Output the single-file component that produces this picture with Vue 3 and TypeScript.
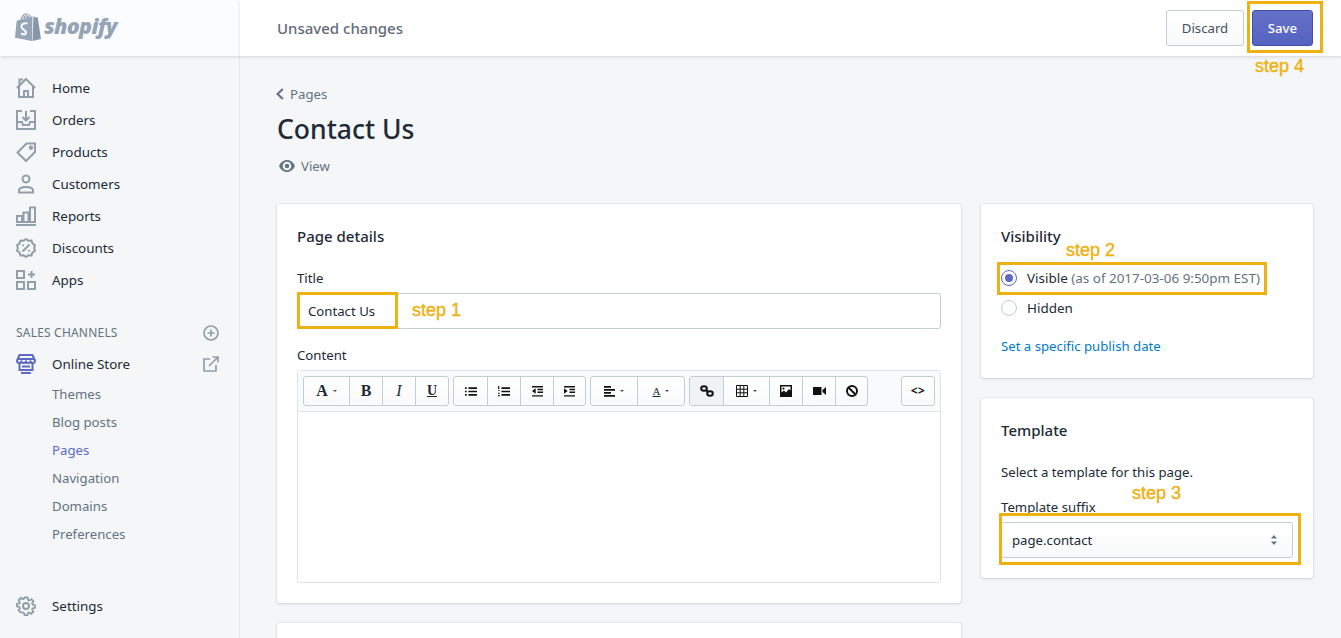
<script setup lang="ts">
interface NavItem { label: string; paths: string[] }
const mainNav: NavItem[] = [
  { label: 'Home', paths: ['M3 8.500V19h14V8.500', 'M1 10 10 1l9 9', 'M8 19v-6h4v6', 'M3.500 7V1.500H7'] },
  { label: 'Orders', paths: ['M6 1H1v18h18V1h-5', 'M1 12h5l1 3h6l1-3h5', 'M10 1v9', 'M6.500 7 10 10.500 13.500 7'] },
  { label: 'Products', paths: ['M10.500 1.500H19V10l-9 9-8.500-8.500z', 'M15 4.500a1.200 1.200 0 1 0 .01 0z'] },
  { label: 'Customers', paths: ['M10 1.500a3.500 3.500 0 1 0 .01 0z', 'M3 18.500v-2c0-2.500 3-3.500 7-3.500s7 1 7 3.500v2z'] },
  { label: 'Reports', paths: ['M0 19h20', 'M1 16v-6h5v6z', 'M7.500 16V6.500h5V16z', 'M14 16V1.500h5V16z'] },
  { label: 'Discounts', paths: ['M10 1l2.500 1.800 3-.2 1 2.900 2.500 1.800-.9 2.700.9 2.700-2.500 1.800-1 2.900-3-.2L10 19l-2.500-1.800-3 .2-1-2.900L1 12.700 1.900 10 1 7.300l2.500-1.800 1-2.900 3 .2z', 'M6.500 13.500l7-7', 'M7 6.500v1.500', 'M13 12v1.500'] },
  { label: 'Apps', paths: ['M1 1h7v7H1z', 'M1 12h7v7H1z', 'M12 12h7v7h-7z', 'M15.500 1v7', 'M12 4.500h7'] },
]
const subNav: string[] = ['Themes', 'Blog posts', 'Pages', 'Navigation', 'Domains', 'Preferences']
</script>

<template>
  <div class="app">
    <aside class="side">
      <div class="brand">
        <svg class="bag" viewBox="0 0 26 30" width="26" height="30">
          <path fill="#95a5b5" d="M17.500 4.300 15.900 4.800C15.500 3.300 14.600 2 13.100 2h-.4C12.200 1.500 11.700 1.200 11.100 1.200 7.700 1.300 6 5.500 5.500 7.700L2.600 8.600C1.700 8.900 1.700 8.900 1.600 9.700L0 25.800 17 29z" />
          <path fill="#8496a8" d="M18.500 4.200 17.500 29 26 27 22.800 5.900C22.700 5.500 22.400 5.400 22.200 5.400L20 5.200z" />
          <path fill="none" stroke="#f6f8fa" stroke-width="2.200" d="M12.500 11.500C11 11 6.500 11 6.500 14.500c0 3.500 4.500 3.200 4.500 6 0 2.500-3 2-5 1" />
          <path fill="none" stroke="#f4f6f8" stroke-width="1" d="M7.500 7.500C8 5 9.500 2.500 11.500 2.500M10.500 6.500C11 5 12 3 13 3c1.500 0 1.700 2 1.700 2.500" />
        </svg>
        <span class="word">shopify</span>
      </div>

      <nav class="nav">
        <a v-for="item in mainNav" :key="item.label" class="row">
          <svg class="ico" viewBox="0 0 20 20" width="20" height="20">
            <path v-for="d in item.paths" :key="d" :d="d" />
          </svg>
          <span>{{ item.label }}</span>
        </a>
      </nav>

      <div class="channels">
        <span>SALES CHANNELS</span>
        <svg class="ico small" viewBox="0 0 16 16" width="16" height="16">
          <circle cx="8" cy="8" r="7" />
          <path d="M8 4.500v7M4.500 8h7" />
        </svg>
      </div>

      <a class="row store">
        <svg class="ico active" viewBox="0 0 20 20" width="20" height="20">
          <path d="M3.500 1h13L19 6.500c0 1.500-1 2.500-2.250 2.500S14.500 8 14.500 6.500c0 1.500-1 2.500-2.250 2.500S10 8 10 6.500C10 8 9 9 7.750 9S5.500 8 5.500 6.500C5.500 8 4.500 9 3.250 9S1 8 1 6.500z" />
          <path d="M3.500 9v7h13V9" />
          <path d="M6 12.500h8" />
          <path d="M5 19h10" />
          <path d="M1 5h18" />
        </svg>
        <span class="store-name">Online Store</span>
        <svg class="ico small ext" viewBox="0 0 16 16" width="16" height="16">
          <path d="M7 3H1v12h12V9" />
          <path d="M6 10 15 1M9.500 1H15v5.500" />
        </svg>
      </a>

      <div class="sub">
        <a v-for="s in subNav" :key="s" :class="['sub-row', { on: s === 'Pages' }]">{{ s }}</a>
      </div>

      <a class="row settings">
        <svg class="ico" viewBox="0 0 20 20" width="20" height="20">
          <path d="M8.300 1h3.400l.5 2.600 1.500.7 2.300-1.400 2.300 2.400-1.500 2.200.6 1.500 2.600.5v3l-2.600.5-.6 1.500 1.500 2.200-2.300 2.400-2.300-1.500-1.500.7-.5 2.200H8.300l-.5-2.200-1.500-.7L4 17.600l-2.300-2.400 1.500-2.200-.6-1.500L0 11V8l2.600-.5.600-1.500-1.500-2.200L4 1.400l2.300 1.400 1.500-.7z" transform="translate(1 .6) scale(.9)" />
          <circle cx="10" cy="10" r="3" />
        </svg>
        <span>Settings</span>
      </a>
    </aside>

    <div class="main">
      <header class="bar">
        <span class="unsaved">Unsaved changes</span>
        <div class="actions">
          <button class="btn discard">Discard</button>
          <button class="btn save">Save</button>
        </div>
      </header>

      <section class="content">
        <div class="crumb">
          <svg viewBox="0 0 8 12" width="8" height="12"><path d="M6.800 1 1.500 6l5.300 5" fill="none" stroke="#637381" stroke-width="2.200" /></svg>
          <span>Pages</span>
        </div>
        <h1 class="title">Contact Us</h1>
        <div class="view">
          <svg viewBox="0 0 16 12" width="16" height="12">
            <path fill="#637381" d="M8 0C4.500 0 1.500 2.500 0 6c1.500 3.500 4.500 6 8 6s6.500-2.500 8-6c-1.500-3.500-4.500-6-8-6zm0 10.300A4.300 4.300 0 1 1 8 1.700a4.300 4.300 0 0 1 0 8.600z" />
            <circle fill="#637381" cx="8" cy="6" r="2.300" />
          </svg>
          <span>View</span>
        </div>

        <div class="grid">
          <div class="col">
            <div class="card">
              <h2>Page details</h2>
              <label class="lab first">Title</label>
              <div class="input">Contact Us</div>
              <label class="lab second">Content</label>
              <div class="editor">
                <div class="tools">
                  <div class="group">
                    <span class="tb w45"><b class="serif big">A</b><i class="caret"></i></span>
                    <span class="tb w33"><b class="serif big">B</b></span>
                    <span class="tb w33"><em class="serif big">I</em></span>
                    <span class="tb w33"><b class="serif under">U</b></span>
                  </div>
                  <div class="group">
                    <span class="tb w33"><svg class="g" viewBox="0 0 14 12" width="12" height="11"><path d="M0 1h2v2H0zM0 5h2v2H0zM0 9h2v2H0zM4 1h10v2H4zM4 5h10v2H4zM4 9h10v2H4z" /></svg></span>
                    <span class="tb w33"><svg class="g" viewBox="0 0 14 12" width="12" height="11"><path d="M0 0h1.500v3H0zM0 4.500h2V5.500H0zM0 7.500h2v1H0zM0 10h2v1.500H0zM4 1h10v2H4zM4 5h10v2H4zM4 9h10v2H4z" /></svg></span>
                    <span class="tb w33"><svg class="g" viewBox="0 0 14 12" width="13" height="11"><path d="M1 0h12v1.500H1zM7 3h6v1.500H7zM7 6h6v1.500H7zM1 10h12v1.500H1zM5 2.500v6L1 5.500z" /></svg></span>
                    <span class="tb w32"><svg class="g" viewBox="0 0 14 12" width="13" height="11"><path d="M1 0h12v1.500H1zM7 3h6v1.500H7zM7 6h6v1.500H7zM1 10h12v1.500H1zM1 2.500v6l4-3z" /></svg></span>
                  </div>
                  <div class="group">
                    <span class="tb w46"><svg class="g" viewBox="0 0 11 11" width="11" height="11"><path d="M0 0h7v1.800H0zM0 3h11v1.800H0zM0 6h7v1.800H0zM0 9h11v1.800H0z" /></svg><i class="caret"></i></span>
                    <span class="tb w47"><b class="serif under small-a">A</b><i class="caret"></i></span>
                  </div>
                  <div class="group">
                    <span class="tb w33 pressed"><svg viewBox="0 0 14 12" width="14" height="12" fill="none" stroke="#111" stroke-width="2"><ellipse cx="4" cy="3.500" rx="2.800" ry="2.300" /><ellipse cx="10" cy="8.500" rx="2.800" ry="2.300" /><path d="M6 5l2 2" /></svg></span>
                    <span class="tb w46"><svg viewBox="0 0 12 12" width="12" height="12" fill="none" stroke="#111"><path d="M.5.500h11v11H.5zM.5 4.200h11M.5 7.800h11M4.200.5v11M7.800.5v11" /></svg><i class="caret"></i></span>
                    <span class="tb w33"><svg viewBox="0 0 12 12" width="12" height="12"><path fill="#111" fill-rule="evenodd" d="M0 0h12v12H0zM1.500 1.500v6l2.500-2 2 2 3-3.500 1.500 1.500v-4zM3.500 2.500a1 1 0 1 1-.01 0z" /></svg></span>
                    <span class="tb w33"><svg class="g" viewBox="0 0 13 10" width="13" height="10"><path d="M0 1h8.500v8H0zM9.500 4 13 1v8L9.500 6z" /></svg></span>
                    <span class="tb w32"><svg viewBox="0 0 12 12" width="12" height="12" fill="none" stroke="#111" stroke-width="2"><circle cx="6" cy="6" r="5" /><path d="M2.500 2.500l7 7" /></svg></span>
                  </div>
                  <div class="group end">
                    <span class="tb w32 code">&lt;&gt;</span>
                  </div>
                </div>
                <div class="area"></div>
              </div>
            </div>
            <div class="card stub"></div>
          </div>

          <div class="col">
            <div class="card">
              <h2>Visibility</h2>
              <div class="radios">
                <div class="radio-row">
                  <span class="radio checked"><i></i></span>
                  <span class="vis">Visible <span class="muted">(as of 2017-03-06 9:50pm EST)</span></span>
                </div>
                <div class="radio-row">
                  <span class="radio"></span>
                  <span class="vis">Hidden</span>
                </div>
              </div>
              <a class="link">Set a specific publish date</a>
            </div>
            <div class="card">
              <h2>Template</h2>
              <p class="hint">Select a template for this page.</p>
              <label class="lab suffix">Template suffix</label>
              <div class="select">
                <span>page.contact</span>
                <svg viewBox="0 0 8 12" width="8" height="12"><path fill="#637381" d="M4 1 7 4.500H1zM4 11 1 7.500h6z" /></svg>
              </div>
            </div>
          </div>
        </div>
      </section>
    </div>

    <i class="mark m1"></i>
    <i class="mark m2"></i>
    <i class="mark m3"></i>
    <i class="mark m4"></i>
    <span class="step s1">step 1</span>
    <span class="step s2">step 2</span>
    <span class="step s3">step 3</span>
    <span class="step s4">step 4</span>
  </div>
</template>

<style scoped>
.app {
  position: relative;
  display: grid;
  grid-template-columns: 240px 1fr;
  height: 638px;
  overflow: hidden;
  background: #f4f6f8;
  color: #212b36;
  font-family: "Noto Sans", "Open Sans", sans-serif;
  font-size: 13.200px;
  line-height: 20px;
}

/* sidebar */
.side {
  display: flex;
  flex-direction: column;
  height: 638px;
  border-right: 1px solid #e4e7ea;
  box-sizing: border-box;
}
.brand {
  display: flex;
  align-items: center;
  gap: 3px;
  height: 56px;
  margin-right: -1px;
  padding: 0 0 4px 15px;
  box-sizing: border-box;
  background: #fbfcfd;
  box-shadow: 0 1px 3px rgba(63, 63, 68, 0.18);
  flex: none;
}
.bag { margin-top: 1px; }
.word {
  font-family: "Open Sans", "Noto Sans", sans-serif;
  font-style: italic;
  font-weight: 800;
  font-size: 21.500px;
  letter-spacing: -0.7px;
  color: #95a5b5;
}
.nav { padding-top: 16px; }
.row {
  display: flex;
  align-items: center;
  height: 32px;
  padding-left: 16px;
  font-size: 13.400px;
  color: #212b36;
}
.row > span { margin-left: 16px; }
.ico {
  flex: none;
  fill: none;
  stroke: #919eab;
  stroke-width: 2;
}
.ico.small { stroke-width: 1.700; }
.ico.active { stroke: #5c6ac4; }
.channels {
  display: flex;
  align-items: center;
  justify-content: space-between;
  height: 32px;
  margin-top: 21px;
  padding: 0 20px 0 16px;
  font-size: 12px;
  letter-spacing: 0.2px;
  color: #637381;
}
.store { margin-top: -1px; }
.store-name { flex: 1; }
.ext { margin-right: 20px; }
.sub { display: flex; flex-direction: column; }
.sub-row {
  display: flex;
  align-items: center;
  height: 28px;
  padding-left: 52px;
  color: #637381;
}
.sub-row.on { color: #5c6ac4; }
.settings { margin-top: auto; margin-bottom: 16px; }

/* top bar */
.main { min-width: 0; display: flex; flex-direction: column; }
.bar {
  display: flex;
  align-items: center;
  justify-content: space-between;
  flex: none;
  height: 56px;
  padding: 0 28px 0 37px;
  background: #fff;
  box-shadow: 0 1px 3px rgba(63, 63, 68, 0.18);
  position: relative;
}
.unsaved { font-size: 15px; font-weight: 500; color: #5f6b78; }
.actions { display: flex; gap: 8px; }
.btn {
  height: 36px;
  border-radius: 3px;
  font: inherit;
  padding: 0;
}
.discard {
  width: 78px;
  color: #454f5b;
  border: 1px solid #c4cdd5;
  background: linear-gradient(#fff, #f9fafb);
}
.save {
  width: 61px;
  color: #fff;
  font-weight: 500;
  border: 1px solid #3f4eae;
  background: linear-gradient(#6371c7, #5563c1);
}

/* page */
.content { padding: 0 28px 0 37px; }
.crumb {
  display: flex;
  align-items: center;
  gap: 6px;
  height: 20px;
  margin-top: 28px;
  margin-left: -1px;
  color: #637381;
}
.title {
  margin: 7px 0 0;
  font-size: 26.500px;
  line-height: 36px;
  font-weight: 500;
  color: #212b36;
}
.view {
  display: flex;
  align-items: center;
  gap: 6px;
  height: 20px;
  margin-top: 9px;
  margin-left: 2px;
  color: #637381;
}
.grid {
  display: grid;
  grid-template-columns: 1fr 332px;
  gap: 20px;
  margin-top: 28px;
}
.col { display: flex; flex-direction: column; gap: 20px; min-width: 0; }
.card {
  padding: 20px;
  background: #fff;
  border-radius: 3px;
  box-shadow: 0 0 0 1px rgba(63, 63, 68, 0.05), 0 1px 3px rgba(63, 63, 68, 0.15);
}
.card h2 {
  margin: 0;
  font-size: 15px;
  line-height: 24px;
  font-weight: 500;
}
.stub { height: 60px; box-sizing: border-box; }
.lab { display: block; }
.lab.first { margin-top: 20px; }
.lab.second { margin-top: 16px; }
.lab.suffix { margin-top: 15px; }
.input {
  display: flex;
  align-items: center;
  box-sizing: border-box;
  height: 36px;
  margin-top: 5px;
  padding: 0 10px;
  border: 1px solid #c4cdd5;
  border-radius: 3px;
}
.editor {
  margin-top: 5px;
  border: 1px solid #dfe3e8;
  border-radius: 3px;
}
.tools {
  display: flex;
  gap: 4px;
  padding: 5px 5px 4px;
  background: #f9fafb;
  border-bottom: 1px solid #dfe3e8;
  box-sizing: border-box;
  height: 41px;
}
.group {
  display: flex;
  height: 30px;
  border: 1px solid #c4cdd5;
  border-radius: 3px;
  background: linear-gradient(#fff, #f9fafb);
  box-sizing: border-box;
  overflow: hidden;
}
.group.end { margin-left: auto; }
.tb {
  display: flex;
  align-items: center;
  justify-content: center;
  gap: 5px;
  box-sizing: border-box;
  height: 100%;
  color: #111;
  border-left: 1px solid #c4cdd5;
}
.tb:first-child { border-left: 0; }
.w32 { width: 32px; }
.w33 { width: 33px; }
.w45 { width: 45px; }
.w46 { width: 46px; }
.w47 { width: 47px; }
.pressed { background: #f0f2f4; }
.serif { font-family: "Liberation Serif", serif; color: #212b36; }
.big { font-size: 16px; }
.under { font-size: 14px; text-decoration: underline; }
.small-a { font-size: 11px; font-weight: 400; }
.caret {
  width: 0;
  height: 0;
  border: 2.500px solid transparent;
  border-top-color: #454f5b;
  border-bottom: 0;
}
.g { fill: #111; }
.code { font-size: 12px; font-weight: 700; letter-spacing: 0.5px; }
.area { height: 170px; }
.radios { margin-top: 15px; }
.radio-row {
  display: flex;
  align-items: center;
  gap: 10px;
  height: 30px;
}
.vis { font-size: 13.450px; }
.radio {
  display: flex;
  align-items: center;
  justify-content: center;
  width: 16px;
  height: 16px;
  box-sizing: border-box;
  border: 1px solid #c4cdd5;
  border-radius: 50%;
  background: linear-gradient(#fff, #f9fafb);
}
.radio.checked { border-color: #5c6ac4; }
.radio i {
  width: 8px;
  height: 8px;
  border-radius: 50%;
  background: #5c6ac4;
}
.muted { color: #637381; }
.link {
  display: block;
  margin-top: 11px;
  line-height: 24px;
  color: #007ace;
}
.hint { margin: 20px 0 0; }
.select {
  display: flex;
  align-items: center;
  justify-content: space-between;
  box-sizing: border-box;
  height: 36px;
  margin-top: 5px;
  padding: 0 14px 0 10px;
  border: 1px solid #c4cdd5;
  border-radius: 3px;
  background: linear-gradient(#fff, #f9fafb);
}

/* annotations laid over the screenshot */
.mark {
  position: absolute;
  box-sizing: border-box;
  border: 3px solid #eeb111;
  pointer-events: none;
}
.m1 { left: 297px; top: 292px; width: 101px; height: 37px; }
.m2 { left: 997px; top: 262px; width: 270px; height: 33px; }
.m3 { left: 999px; top: 513px; width: 302px; height: 52px; }
.m4 { left: 1247px; top: 1px; width: 76px; height: 52px; }
.step {
  position: absolute;
  font-family: "Liberation Sans", Arial, sans-serif;
  font-size: 18px;
  line-height: 20px;
  color: #eeb111;
  -webkit-text-stroke: 0.4px #eeb111;
}
.s1 { left: 412px; top: 300px; }
.s2 { left: 1066px; top: 240px; }
.s3 { left: 1132px; top: 483px; }
.s4 { left: 1255px; top: 56px; }
</style>
